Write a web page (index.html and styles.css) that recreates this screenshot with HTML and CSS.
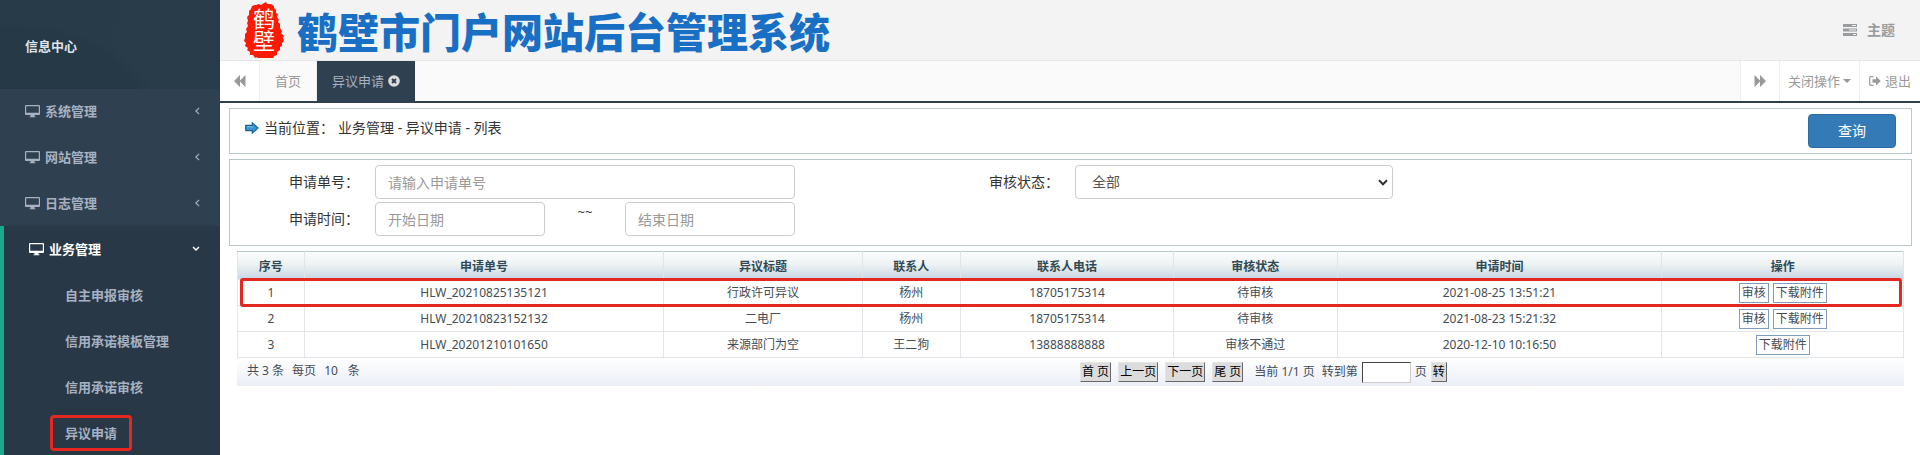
FILE: index.html
```html
<!DOCTYPE html>
<html lang="zh-CN">
<head>
<meta charset="utf-8">
<meta name="viewport" content="width=device-width, initial-scale=1">
<title>鹤壁市门户网站后台管理系统</title>
<link rel="stylesheet" href="styles.css">
</head>
<body>
<svg class="defs" aria-hidden="true">
  <symbol id="monitor" viewBox="0 0 15 13">
    <path fill="currentColor" fill-rule="evenodd" d="M1 0h13q1 0 1 1v8q0 1-1 1H9.500v1.500h1v.8h-6v-.8h1V10H1q-1 0-1-1V1q0-1 1-1zM1.200 1.200v6.600h12.600V1.200z"/>
  </symbol>
  <symbol id="left" viewBox="0 0 6 10"><path d="M5 1 1 5l4 4" fill="none" stroke="currentColor" stroke-width="1.500"/></symbol>
  <symbol id="down" viewBox="0 0 8 6"><path d="M1 1l3 3 3-3" fill="none" stroke="currentColor" stroke-width="1.500"/></symbol>
  <symbol id="rewind" viewBox="0 0 12 12"><path fill="currentColor" d="M0 6 6 0v5.500L11.500 0v12L6 6.500V12z"/></symbol>
</svg>
<div class="shell">
  <nav class="sidebar">
    <div class="profile">信息中心</div>
    <ul class="menu">
      <li><a href="#"><svg class="monitor"><use href="#monitor"/></svg>系统管理<svg class="chev"><use href="#left"/></svg></a></li>
      <li><a href="#"><svg class="monitor"><use href="#monitor"/></svg>网站管理<svg class="chev"><use href="#left"/></svg></a></li>
      <li><a href="#"><svg class="monitor"><use href="#monitor"/></svg>日志管理<svg class="chev"><use href="#left"/></svg></a></li>
      <li class="open">
        <a href="#"><svg class="monitor"><use href="#monitor"/></svg>业务管理<svg class="chev chev-down"><use href="#down"/></svg></a>
        <ul class="submenu">
          <li><a href="#">自主申报审核</a></li>
          <li><a href="#">信用承诺模板管理</a></li>
          <li><a href="#">信用承诺审核</a></li>
          <li><a href="#"><span class="marked">异议申请</span></a></li>
        </ul>
      </li>
    </ul>
  </nav>
  <main class="main">
    <header class="banner">
      <svg class="seal" viewBox="0 0 41 56" role="img" aria-label="鹤壁">
        <path fill="#fb1b04" d="M12 3l3-1 2 1 3-2 2-1 1 2 4 0 3 2 0 2 2 2 0 3 2 1-1 3 2 3-1 2 2 2 0 4 2 3-1 2 3 3-1 2 1 3-2 2 0 3-2 1 0 3-3 2 0 3-3 1-1 3-3-1-2 2-3 0-3-1-3 1-2-3-2 1-2-3-3 0 0-3-3-2 1-2-3-2 1-3-2-2 1-3 0-4 2-2-1-3 2-3-1-3 1-2-1-4 2-2 0-4 2-2 1-3 3-1z"/>
        <text x="20" y="6">鹤壁</text>
      </svg>
      <h1>鹤壁市门户网站后台管理系统</h1>
      <a class="theme" href="#">
        <svg viewBox="0 0 14 12"><path fill="currentColor" fill-rule="evenodd" d="M0 0h14v3H0zM9 1v1h4V1zM0 4.500h14v3H0zM6 5.500v1h7v-1zM0 9h14v3H0zM10 10v1h3v-1z"/></svg>主题</a>
    </header>
    <div class="tabs">
      <button class="tab-nav" type="button" aria-label="向左"><svg><use href="#rewind"/></svg></button>
      <a class="tab" href="#">首页</a>
      <a class="tab current" href="#">异议申请<svg viewBox="0 0 12 12"><circle cx="6" cy="6" r="5.800" fill="#dcdcdc"/><path d="M4 4l4 4M8 4l-4 4" stroke="#2f4050" stroke-width="1.900"/></svg></a>
      <button class="tab-nav forward" type="button" aria-label="向右"><svg><use href="#rewind"/></svg></button>
      <button class="close-menu" type="button">关闭操作<i class="caret"></i></button>
      <a class="exit" href="#"><svg viewBox="0 0 12 10"><path d="M4.500.7H2Q.7.700.7 2v6q0 1.300 1.300 1.300h2.500" fill="none" stroke="currentColor" stroke-width="1.200"/><path fill="currentColor" d="M3.500 3.300H7V.500L11.800 5 7 9.500V6.700H3.500z"/></svg>退出</a>
    </div>
    <div class="content">
      <section class="panel crumb">
        <div class="path">
          <svg viewBox="0 0 14 12"><path d="M.7 3.300h6.600V.900L13 6l-5.700 5.100V8.700H.7z" fill="#3796cf" stroke="#17639b" stroke-width="1.200"/><path d="M2 4.800h6" stroke="#76c2e8"/></svg>
          <span>当前位置：</span><span>业务管理 - 异议申请 - 列表</span>
        </div>
        <button class="query" type="button">查询</button>
      </section>
      <form class="panel filter">
        <label for="no">申请单号：</label>
        <input id="no" type="text" placeholder="请输入申请单号">
        <label for="state">审核状态：</label>
        <div class="select"><select id="state"><option>全部</option></select><svg viewBox="0 0 10 7"><path d="M1 1.300l4 4 4-4" fill="none" stroke="#333" stroke-width="2"/></svg></div>
        <label class="row2" for="start">申请时间：</label>
        <div class="range row2">
          <input id="start" type="text" placeholder="开始日期">
          <span>~~</span>
          <input type="text" aria-label="结束日期" placeholder="结束日期">
        </div>
      </form>
      <div class="list">
        <table>
          <colgroup><col class="c-idx"><col class="c-no"><col class="c-title"><col class="c-name"><col class="c-phone"><col class="c-state"><col class="c-time"><col></colgroup>
          <thead><tr><th>序号</th><th>申请单号</th><th>异议标题</th><th>联系人</th><th>联系人电话</th><th>审核状态</th><th>申请时间</th><th>操作</th></tr></thead>
          <tbody>
            <tr class="outlined"><td>1</td><td>HLW_20210825135121</td><td>行政许可异议</td><td>杨州</td><td>18705175314</td><td>待审核</td><td>2021-08-25 13:51:21</td><td><div class="ops"><button type="button">审核</button><button type="button">下载附件</button></div></td></tr>
            <tr><td>2</td><td>HLW_20210823152132</td><td>二电厂</td><td>杨州</td><td>18705175314</td><td>待审核</td><td>2021-08-23 15:21:32</td><td><div class="ops"><button type="button">审核</button><button type="button">下载附件</button></div></td></tr>
            <tr><td>3</td><td>HLW_20201210101650</td><td>来源部门为空</td><td>王二狗</td><td>13888888888</td><td>审核不通过</td><td>2020-12-10 10:16:50</td><td><div class="ops"><button type="button">下载附件</button></div></td></tr>
          </tbody>
        </table>
        <div class="pager">
          <div class="totals"><span>共 3 条</span><span>每页</span><span>10</span><span class="unit">条</span></div>
          <div class="pages">
            <button type="button">首 页</button><button type="button">上一页</button><button type="button">下一页</button><button type="button">尾 页</button>
            <span class="now">当前 1/1 页</span>
            <div class="jump"><label for="page">转到第</label><input id="page" type="text"><span>页</span><button type="button">转</button></div>
          </div>
        </div>
      </div>
    </div>
  </main>
</div>
</body>
</html>
```
FILE: styles.css
```css
* { box-sizing: border-box; }

body {
  margin: 0;
  font: 13px/20px "Noto Sans", "Noto Sans CJK SC", sans-serif;
  color: #333;
  background: #fff;
}

ul { list-style: none; margin: 0; padding: 0; }
a { color: inherit; text-decoration: none; }
button, input, select { font: inherit; color: inherit; margin: 0; }
button { cursor: pointer; }
svg { display: block; flex: none; }
.defs { position: absolute; width: 0; height: 0; }

.shell { display: flex; height: 100vh; }

/* Sidebar */
.sidebar {
  flex: none;
  width: 220px;
  overflow-y: auto;
  scrollbar-width: none;
  background: #2f4050;
  color: #a7b1c2;
  font-weight: 600;
}
.profile {
  display: flex;
  align-items: center;
  height: 89px;
  padding: 2px 25px 0;
  color: #dfe4ed;
  background: radial-gradient(ellipse 150px 100px at 10px 120px, #253947 90%, transparent 100%), linear-gradient(100deg, #273b49, #293c4a);
}
.menu { margin-top: -1px; }
.menu a { display: flex; align-items: center; height: 46px; padding: 0 20px 0 25px; }
.monitor { width: 15px; height: 13px; margin-right: 5px; }
.chev { width: 5px; height: 8px; margin-left: auto; }
.chev-down { width: 8px; height: 6px; }
.open { border-left: 4px solid #19aa8d; background: #293846; }
.open > a { color: #fff; }
.menu .submenu a { padding-left: 61px; }
.marked { position: relative; }
.marked::after {
  content: "";
  position: absolute;
  inset: -8px -15px;
  border: 3px solid #e8281e;
  border-radius: 4px;
}

/* Banner */
.main { flex: 1; min-width: 0; overflow: hidden; }
.banner {
  display: flex;
  align-items: center;
  height: 61px;
  padding: 0 25px 0 24px;
  background: #f3f3f4;
  border-bottom: 1px solid #e7e7e7;
}
.seal { width: 41px; height: 56px; }
.seal text { font: 22px "Noto Sans CJK SC", sans-serif; writing-mode: vertical-rl; fill: #fff; }
.banner h1 {
  margin: 0 0 0 12px;
  font: 900 41px/56px "Noto Sans CJK SC", sans-serif;
  color: #196fc4;
  white-space: nowrap;
}
.theme {
  display: flex;
  align-items: center;
  gap: 10px;
  margin-left: auto;
  font-size: 14px;
  font-weight: 600;
  color: #999c9e;
}
.theme svg { width: 14px; height: 12px; }

/* Tabs */
.tabs {
  display: flex;
  height: 42px;
  background: #fafafa;
  border-bottom: 2px solid #2f4050;
  color: #999;
}
.tabs > * { display: flex; align-items: center; }
.tabs button { background: #fff; border: 0; padding: 0; }
.tabs .tab-nav { width: 40px; justify-content: center; border-right: 1px solid #eee; }
.tab-nav svg { width: 12px; height: 12px; }
.tab { padding: 0 15px; border-right: 1px solid #eee; }
.tab.current { gap: 4px; border-right: 0; background: #2f4050; color: #a7b1c2; }
.tab.current svg { width: 12px; height: 12px; }
.tabs .forward { margin-left: auto; border-left: 1px solid #eee; }
.forward svg { transform: scaleX(-1); }
.tabs .close-menu { width: 80px; justify-content: center; gap: 3px; border-right: 1px solid #eee; }
.caret { border: 4px solid transparent; border-top-color: #999; border-bottom: 0; }
.exit { width: 60px; justify-content: center; gap: 4px; background: #fff; }
.exit svg { width: 12px; height: 10px; }

/* Content */
.content { padding: 5px 8px 0 9px; font-size: 14px; }
.panel { border: 1px solid #b9c8ca; margin-bottom: 5px; }
.crumb { display: flex; justify-content: space-between; padding: 5px 15px; }
.path { display: flex; align-items: center; height: 28px; }
.path svg { width: 14px; height: 12px; margin-right: 5px; }
.path span + span { margin-left: 4px; }
.query {
  width: 88px;
  height: 34px;
  border: 1px solid #2e6da4;
  border-radius: 4px;
  background: #337ab7;
  color: #fff;
}

.filter {
  display: grid;
  grid-template-columns: 145fr 420fr 280fr 318fr 518fr;
  row-gap: 3px;
  padding: 5px 0 9px;
}
.filter label { align-self: center; padding-right: 16px; text-align: right; }
.filter input, .filter select {
  width: 100%;
  height: 34px;
  padding: 0 12px;
  border: 1px solid #ccc;
  border-radius: 4px;
  background: #fff;
  color: #555;
}
.filter input::placeholder { color: #999; }
.select { position: relative; }
.filter select { appearance: none; padding-left: 16px; }
.select svg { position: absolute; right: 5px; top: 14px; width: 10px; height: 7px; pointer-events: none; }
.filter .row2 { grid-row: 2; }
.range { display: grid; grid-template-columns: 170fr 80fr 170fr; }
.range span { text-align: center; font-size: 13px; }

/* List */
.list { margin: 0 8px; font-size: 12px; color: #444c55; }
table { width: 100%; border-collapse: collapse; table-layout: fixed; }
.c-idx { width: 4%; }
.c-no { width: 21.6%; }
.c-title { width: 11.9%; }
.c-name { width: 5.9%; }
.c-phone { width: 12.8%; }
.c-state { width: 9.8%; }
.c-time { width: 19.5%; }
th, td { height: 26px; padding: 0; border: 1px solid #e1e5ea; text-align: center; line-height: 18px; }
thead tr { background: linear-gradient(#fbfdfd, #edf2f2 45%, #c5d4e5); }
th { height: 28px; border-top-color: #b9c8ca; padding-top: 2px; color: #2f4a55; font-weight: 600; }
.outlined { position: relative; }
.outlined td:last-child::after {
  content: "";
  position: absolute;
  inset: -2px 2px -1px;
  border: 3px solid #e2281f;
  border-radius: 3px;
  pointer-events: none;
}
.ops { display: flex; justify-content: center; gap: 4px; }
.ops button { height: 20px; padding: 0 2px; border: 1px solid #7f9db9; background: #fff; line-height: 18px; }

.pager {
  display: grid;
  grid-template-columns: 843fr 824fr;
  height: 28px;
  padding-top: 4px;
  background: linear-gradient(#fff, #eceef7);
}
.totals { display: flex; padding-left: 10px; gap: 8px; line-height: 18px; }
.unit { margin-left: 2px; }
.pages { display: flex; align-items: center; height: 20px; gap: 7px; white-space: nowrap; }
.pages button {
  height: 20px;
  padding: 0 1px;
  border: 1px solid;
  border-color: #e4e4e4 #666 #666 #e4e4e4;
  background: #dcdcdc;
  color: #000;
  line-height: 18px;
}
.now { margin-left: 4px; }
.jump { display: flex; align-items: center; gap: 4px; }
.jump input { width: 49px; height: 21px; padding: 0 2px; border: 1px solid; border-color: #444 #ccc #ccc #444; background: #fff; }
```
